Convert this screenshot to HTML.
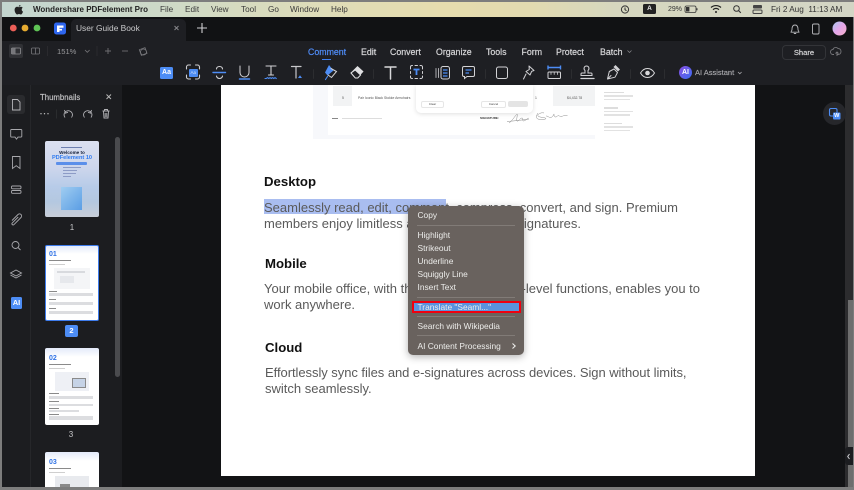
<!DOCTYPE html>
<html><head><meta charset="utf-8"><style>
html,body{margin:0;padding:0;width:854px;height:490px;overflow:hidden;background:#7d7d7d;font-family:"Liberation Sans",sans-serif}
#w{position:absolute;left:0;top:0;width:854px;height:490px;filter:blur(.3px)}
.a{position:absolute;white-space:nowrap}
svg{position:absolute;left:0;top:0}
.m{top:4px;font-size:8.2px;line-height:11px;color:#3a3a3a}
.n{top:46px;font-size:8.8px;line-height:12px;color:#d6d6d8;-webkit-text-stroke:.2px #d6d6d8}
.b{font-size:13px;line-height:16px;color:#5a5a5a;left:264px}
.h{font-size:13.2px;line-height:16px;color:#111;font-weight:bold}
.c{left:417.5px;font-size:8.4px;line-height:11px;color:#ececea}
.th{background:#fff;border-radius:2px}
</style></head><body><div id="w">
<div class="a" style="left:2px;top:2px;width:852px;height:15px;background:linear-gradient(90deg,#c3d5cf 0,#cdd9c8 18%,#dfdcb8 38%,#e6dcae 52%,#e2dab0 62%,#d6d7bf 72%,#d3d5c5 100%)"></div>
<div class="a" style="left:2px;top:17px;width:851px;height:24px;background:#111214"></div>
<div class="a" style="left:2px;top:41px;width:851px;height:44px;background:#1e1f23"></div>
<div class="a" style="left:71px;top:19px;width:115px;height:22px;background:#1e1f23;border-radius:5px 5px 0 0"></div>
<div class="a" style="left:2px;top:85px;width:28px;height:402px;background:#1c1d20"></div>
<div class="a" style="left:30px;top:85px;width:92px;height:402px;background:#1c1d20;border-left:1px solid #26272a"></div>
<div class="a" style="left:122px;top:85px;width:723px;height:402px;background:#121315"></div>
<div class="a" style="left:845px;top:85px;width:8px;height:402px;background:#2c2c2e"></div>
<div class="a" style="left:848px;top:300px;width:5px;height:187px;background:#6e6e6e"></div>
<div class="a" style="left:0;top:487px;width:854px;height:3px;background:#7d7d7d"></div>

<div class="a" style="left:33px;top:4px;font-size:8px;line-height:11px;color:#222;font-weight:bold">Wondershare PDFelement Pro</div>
<div class="a m" style="left:160px">File</div><div class="a m" style="left:185px">Edit</div><div class="a m" style="left:211px">View</div><div class="a m" style="left:241px">Tool</div><div class="a m" style="left:268px">Go</div><div class="a m" style="left:290px">Window</div><div class="a m" style="left:331px">Help</div>
<div class="a" style="left:643px;top:4px;width:13px;height:10px;background:#222;border-radius:1.5px;color:#eee;font-size:6.5px;line-height:10px;text-align:center;font-weight:bold">A</div>
<div class="a" style="left:668px;top:5px;font-size:7px;line-height:9px;color:#333">29%</div>
<div class="a" style="left:771px;top:4px;font-size:8.2px;line-height:11px;color:#333">Fri 2 Aug&nbsp; 11:13 AM</div>

<div class="a" style="left:76px;top:23px;font-size:8.4px;line-height:11px;color:#c8c8ca">User Guide Book</div>
<div class="a" style="left:57px;top:46px;font-size:7.6px;line-height:11px;color:#98989b">151%</div>
<div class="a n" style="left:308px;color:#4f8cf7;-webkit-text-stroke-color:#4f8cf7">Comment</div><div class="a n" style="left:361px">Edit</div><div class="a n" style="left:390px">Convert</div><div class="a n" style="left:436px">Organize</div><div class="a n" style="left:486px">Tools</div><div class="a n" style="left:521.5px">Form</div><div class="a n" style="left:556px">Protect</div><div class="a n" style="left:600px">Batch</div>
<div class="a" style="left:322px;top:58.5px;width:9px;height:1.5px;background:#3d7ff0"></div>
<div class="a" style="left:782px;top:45px;width:42px;height:13px;border:1px solid #333438;border-radius:4px;text-align:center;font-size:7.6px;line-height:14px;color:#dcdcde;-webkit-text-stroke:.15px #dcdcde">Share</div>
<div class="a" style="left:695px;top:68px;font-size:7.5px;line-height:10px;color:#a8a8ac;-webkit-text-stroke:.15px #a8a8ac">AI Assistant</div>
<div class="a" style="left:679px;top:66px;width:13px;height:13px;border-radius:50%;background:linear-gradient(135deg,#8a4fe0,#3a6cf2);color:#fff;font-size:7px;font-weight:bold;line-height:13px;text-align:center">AI</div>
<div class="a" style="left:160px;top:67px;width:13px;height:12px;background:#4d8df5;border-radius:1.5px;color:#fff;font-size:7px;font-weight:bold;line-height:12px;text-align:center">Aa</div>
<div class="a" style="left:189px;top:68.5px;width:8.5px;height:8.5px;background:#4d8df5;border-radius:1px;color:#cfe0fb;font-size:4.5px;line-height:8.5px;text-align:center">Aa</div>

<div class="a" style="left:40px;top:92px;font-size:7.8px;line-height:11px;color:#c4c4c6;-webkit-text-stroke:.15px #c4c4c6">Thumbnails</div>
<div class="a" style="left:11px;top:297px;width:11px;height:12px;background:#4d8df5;border-radius:1.5px;color:#fff;font-size:7.5px;font-weight:bold;line-height:12px;text-align:center">AI</div>

<div class="a" style="left:115px;top:137px;width:5px;height:240px;background:#4a4b4e;border-radius:3px"></div>

<div class="a th" style="left:45px;top:141px;width:54px;height:76px;background:linear-gradient(180deg,#dbe0f0 0,#cdd6ec 35%,#b7cbe8 60%,#b4c8e0 80%,#c8ced8 100%)"></div>
<div class="a" style="left:61px;top:146.5px;width:21px;height:1.5px;background:#6d7fb0"></div>
<div class="a" style="left:45px;top:149.5px;width:54px;text-align:center;font-size:4.6px;line-height:5px;font-weight:bold;color:#16203a">Welcome to</div>
<div class="a" style="left:45px;top:155px;width:54px;text-align:center;font-size:5.6px;line-height:6px;font-weight:bold;color:#2f7bf0">PDFelement 10</div>
<div class="a" style="left:56px;top:162px;width:31px;height:2.5px;background:#5b8fea;border-radius:1px"></div>
<div class="a" style="left:63px;top:166.5px;width:18px;height:1px;background:#8d9cc6"></div>
<div class="a" style="left:63px;top:169.5px;width:14px;height:1px;background:#8d9cc6"></div>
<div class="a" style="left:63px;top:172.5px;width:13px;height:1px;background:#8d9cc6"></div>
<div class="a" style="left:63px;top:175.5px;width:8px;height:1px;background:#8d9cc6"></div>
<div class="a" style="left:61px;top:187px;width:21px;height:23px;background:linear-gradient(135deg,#9ccdf2,#4a96e6);opacity:.85"></div>
<div class="a" style="left:68px;top:223px;font-size:8px;line-height:10px;color:#c8c8ca;width:8px;text-align:center">1</div>

<div class="a th" style="left:45px;top:245px;width:52px;height:74px;border:1px solid #3e7cec;background:linear-gradient(180deg,#e3eafa 0,#fff 8px)"></div>
<div class="a" style="left:49px;top:251px;font-size:7px;line-height:8px;font-weight:bold;color:#2f72e6">01</div>
<div class="a" style="left:49px;top:260px;width:22px;height:1px;background:#8a8a8a"></div>
<div class="a" style="left:49px;top:263.5px;width:16px;height:1px;background:#cfcfcf"></div>
<div class="a" style="left:54px;top:268px;width:36px;height:21px;background:#f4f5f7"></div>
<div class="a" style="left:57px;top:271px;width:28px;height:2px;background:#d8dade"></div>
<div class="a" style="left:60px;top:276px;width:14px;height:7px;background:#e6e8ec"></div>
<div class="a" style="left:49px;top:290.5px;width:8px;height:1px;background:#8a8a8a"></div>
<div class="a" style="left:49px;top:293px;width:44px;height:3px;background:#dcdde0"></div>
<div class="a" style="left:49px;top:299px;width:7px;height:1px;background:#8a8a8a"></div>
<div class="a" style="left:49px;top:302px;width:44px;height:3px;background:#dcdde0"></div>
<div class="a" style="left:49px;top:308px;width:7px;height:1px;background:#8a8a8a"></div>
<div class="a" style="left:49px;top:311px;width:44px;height:3px;background:#dcdde0"></div>
<div class="a" style="left:65px;top:325px;width:13px;height:12px;background:#4d8df5;border-radius:2px;color:#fff;font-size:7.5px;font-weight:bold;line-height:12px;text-align:center">2</div>

<div class="a th" style="left:45px;top:348px;width:54px;height:77px;background:linear-gradient(180deg,#e3eafa 0,#fff 9px)"></div>
<div class="a" style="left:49px;top:355px;font-size:7px;line-height:8px;font-weight:bold;color:#2f72e6">02</div>
<div class="a" style="left:49px;top:364px;width:22px;height:1px;background:#8a8a8a"></div>
<div class="a" style="left:49px;top:367.5px;width:16px;height:1px;background:#cfcfcf"></div>
<div class="a" style="left:55px;top:372px;width:34px;height:19px;background:#eef0f5"></div>
<div class="a" style="left:72px;top:378px;width:12px;height:8px;background:#c6d3e6;border:1px solid #8a8a8a"></div>
<div class="a" style="left:49px;top:393px;width:10px;height:1px;background:#8a8a8a"></div>
<div class="a" style="left:49px;top:396px;width:44px;height:3px;background:#dcdde0"></div>
<div class="a" style="left:49px;top:401px;width:10px;height:1px;background:#8a8a8a"></div>
<div class="a" style="left:49px;top:403.5px;width:44px;height:2px;background:#dcdde0"></div>
<div class="a" style="left:49px;top:407.5px;width:10px;height:1px;background:#8a8a8a"></div>
<div class="a" style="left:49px;top:409.5px;width:30px;height:2px;background:#dcdde0"></div>
<div class="a" style="left:49px;top:413.5px;width:10px;height:1px;background:#8a8a8a"></div>
<div class="a" style="left:49px;top:416px;width:44px;height:4px;background:#dcdde0"></div>
<div class="a" style="left:67px;top:430px;font-size:8px;line-height:10px;color:#c8c8ca;width:8px;text-align:center">3</div>

<div class="a th" style="left:45px;top:452px;width:54px;height:35px;background:linear-gradient(180deg,#e3eafa 0,#fff 9px);border-radius:2px 2px 0 0"></div>
<div class="a" style="left:49px;top:459px;font-size:7px;line-height:8px;font-weight:bold;color:#2f72e6">03</div>
<div class="a" style="left:49px;top:468px;width:22px;height:1px;background:#8a8a8a"></div>
<div class="a" style="left:49px;top:471.5px;width:16px;height:1px;background:#cfcfcf"></div>
<div class="a" style="left:55px;top:476px;width:34px;height:11px;background:#e8eaee"></div>
<div class="a" style="left:60px;top:484px;width:10px;height:3px;background:#8a8a8a"></div>

<div class="a" style="left:221px;top:85px;width:534px;height:391px;background:#fff"></div>
<div class="a" style="left:313px;top:85px;width:282px;height:54px;background:#f7f8fb"></div>
<div class="a" style="left:328px;top:85px;width:267px;height:50px;background:#fff"></div>
<div class="a" style="left:333px;top:86px;width:19px;height:20px;background:#f2f3f4"></div>
<div class="a" style="left:358px;top:96px;font-size:3.4px;line-height:4px;color:#555">Pair Iconic Black Stokke Armchairs</div>
<div class="a" style="left:342px;top:96px;font-size:3.4px;line-height:4px;color:#555">5</div>
<div class="a" style="left:553px;top:86px;width:42px;height:20px;background:#f2f3f4"></div>
<div class="a" style="left:567px;top:96px;font-size:3.4px;line-height:4px;color:#555">$4,432.78</div>
<div class="a" style="left:535px;top:96px;font-size:3.4px;line-height:4px;color:#555">1</div>
<div class="a" style="left:416px;top:85px;width:117px;height:28px;background:#fff;border-radius:0 0 5px 5px;box-shadow:0 1px 5px rgba(0,0,0,.13)"></div>
<div class="a" style="left:421px;top:100.5px;width:21px;height:5px;border:1px solid #e6e6e6;border-radius:2px;font-size:3px;line-height:5px;text-align:center;color:#444">Clear</div>
<div class="a" style="left:481px;top:100.5px;width:23px;height:5px;border:1px solid #e6e6e6;border-radius:2px;font-size:3px;line-height:5px;text-align:center;color:#444">Cancel</div>
<div class="a" style="left:508px;top:100.5px;width:20px;height:6px;background:#e4e4e4;border-radius:2px"></div>
<div class="a" style="left:332px;top:118px;width:6px;height:1px;background:#888"></div>
<div class="a" style="left:342px;top:118px;width:40px;height:1px;background:#ddd"></div>
<div class="a" style="left:480px;top:116px;font-size:3.1px;line-height:4px;color:#333;font-weight:bold">SIGNATURE:</div>
<div class="a" style="left:596px;top:85px;width:55px;height:60px;background:#fff"></div>
<div class="a" style="left:604px;top:91.5px;width:20px;height:1.5px;background:#ddd"></div><div class="a" style="left:604px;top:95px;width:29px;height:1.5px;background:#e2e2e2"></div><div class="a" style="left:604px;top:98.5px;width:26px;height:1.5px;background:#e2e2e2"></div>
<div class="a" style="left:604px;top:107px;width:14px;height:1.5px;background:#ddd"></div><div class="a" style="left:604px;top:110.5px;width:29px;height:1.5px;background:#e2e2e2"></div><div class="a" style="left:604px;top:114px;width:26px;height:1.5px;background:#e2e2e2"></div>
<div class="a" style="left:604px;top:122.5px;width:18px;height:1.5px;background:#ddd"></div><div class="a" style="left:604px;top:126px;width:29px;height:1.5px;background:#e2e2e2"></div><div class="a" style="left:604px;top:129.5px;width:26px;height:1.5px;background:#e2e2e2"></div>

<div class="a" style="left:264px;top:198.5px;width:182px;height:15.5px;background:#a9bdf0"></div>
<div class="a h" style="left:264px;top:174px">Desktop</div>
<div class="a b" style="top:200px">Seamlessly read, edit, comment, compress, convert, and sign. Premium</div>
<div class="a b" style="top:216px">members enjoy limitless access</div>
<div class="a b" style="top:216px;left:auto;right:273px">signatures.</div>
<div class="a h" style="left:265px;top:256px">Mobile</div>
<div class="a b" style="top:281px">Your mobile office, with the same</div>
<div class="a b" style="top:281px;left:auto;right:154px">-level functions, enables you to</div>
<div class="a b" style="top:297px">work anywhere.</div>
<div class="a h" style="left:265px;top:340px">Cloud</div>
<div class="a b" style="top:365px;left:265px;letter-spacing:-.05px">Effortlessly sync files and e-signatures across devices. Sign without limits,</div>
<div class="a b" style="top:381px;left:265px">switch seamlessly.</div>

<div class="a" style="left:408px;top:206px;width:116px;height:149px;background:#69625e;border-radius:5px;box-shadow:0 2px 8px rgba(0,0,0,.3)"></div>
<div class="a" style="left:417px;top:225px;width:98px;height:1px;background:#817b77"></div>
<div class="a" style="left:417px;top:296.5px;width:98px;height:1px;background:#817b77"></div>
<div class="a" style="left:417px;top:316px;width:98px;height:1px;background:#817b77"></div>
<div class="a" style="left:417px;top:335px;width:98px;height:1px;background:#817b77"></div>
<div class="a" style="left:412px;top:300.5px;width:105px;height:8.5px;background:#5a93dd;border:2px solid #ee0010"></div>
<div class="a c" style="top:210px">Copy</div>
<div class="a c" style="top:230px">Highlight</div>
<div class="a c" style="top:243px">Strikeout</div>
<div class="a c" style="top:256px">Underline</div>
<div class="a c" style="top:269px">Squiggly Line</div>
<div class="a c" style="top:282px">Insert Text</div>
<div class="a c" style="top:301.5px">Translate "Seaml..."</div>
<div class="a c" style="top:321px">Search with Wikipedia</div>
<div class="a c" style="top:341px">AI Content Processing</div>

<div class="a" style="left:823px;top:102px;width:23px;height:23px;border-radius:50%;background:#26272b"></div>
<div class="a" style="left:845px;top:447px;width:8px;height:18px;background:#1c1d20;border-radius:3px 0 0 3px"></div>

<svg width="854" height="490" viewBox="0 0 854 490" fill="none">
<path d="M20.6 5c-.2 1-1 1.7-1.900 1.700 0-1 .9-1.800 1.900-1.700zM21.700 9.400c0-1 .8-1.500 1-1.700-.6-.8-1.400-1-1.800-1-.8 0-1.400.5-1.900.5s-1-.5-1.800-.5c-1.400 0-2.600 1.200-2.600 3.200 0 2 1.400 4.600 2.600 4.600.6 0 1-.5 1.800-.5s1.100.5 1.800.5c1 0 1.900-1.800 2.200-2.900-.8-.4-1.300-1-1.300-2.200z" fill="#222"/>
<g stroke="#333" stroke-width="1"><circle cx="625" cy="9.5" r="3.6"/><path d="M625 7.500v2.200l1.500 1"/></g>
<rect x="685" y="6" width="11" height="6.5" rx="1.5" stroke="#333" stroke-width=".8"/><rect x="686" y="7" width="3.4" height="4.5" fill="#333"/><path d="M697 8.300v2" stroke="#333"/>
<path d="M711 7.500c3-2.600 7-2.600 10 0M713 9.600c2-1.600 4-1.600 6 0" stroke="#222" stroke-width="1.2"/><circle cx="716" cy="12" r="1" fill="#222"/>
<circle cx="736.5" cy="8.5" r="2.8" stroke="#333" stroke-width="1"/><path d="M738.600 10.600l2.200 2.200" stroke="#333" stroke-width="1.1"/>
<rect x="753" y="5" width="9" height="3.5" rx="1" fill="#444"/><rect x="753" y="10" width="9" height="3.5" rx="1" stroke="#444"/>

<circle cx="13.3" cy="28" r="3.4" fill="#ec5f57"/><circle cx="25" cy="28" r="3.4" fill="#e6ab30"/><circle cx="37" cy="28" r="3.4" fill="#5fc455"/>
<rect x="54" y="22.5" width="12" height="12" rx="2.5" fill="#2e66ee"/><path d="M57 25.500h6.500v2.200h-4v1.200h2.500v1.600h-2.500v1.500h-2.500z" fill="#fff"/>
<path d="M174.500 26l4 4M178.500 26l-4 4" stroke="#8a8a8e" stroke-width=".9"/>
<path d="M202 23v10M197 28h10" stroke="#cfcfd2" stroke-width="1.1"/>
<path d="M795 25c-2.600 0-3 2-3 4.500 0 1.200-1 2-1 2.700h8c0-.7-1-1.500-1-2.700 0-2.500-.4-4.500-3-4.500zM793.800 33.500h2.400" stroke="#b8b8bc" stroke-width=".9"/>
<rect x="812.5" y="24" width="6.5" height="10" rx="1.3" stroke="#b8b8bc" stroke-width=".9"/>
<circle cx="839.5" cy="28.5" r="7" fill="url(#av)"/>
<defs><linearGradient id="av" x1="0" y1="0" x2="1" y2="1"><stop offset="0" stop-color="#a6c8f0"/><stop offset=".5" stop-color="#e5a6ea"/><stop offset="1" stop-color="#f5b0c8"/></linearGradient></defs>

<rect x="9" y="44" width="14" height="14" rx="2" fill="#303135"/>
<rect x="11.5" y="48" width="9" height="6" rx="1" stroke="#8e8e92" stroke-width=".8"/><path d="M15 48v6" stroke="#8e8e92" stroke-width=".8"/><path d="M12 48.500h3v5h-3z" fill="#77777b"/>
<rect x="31.5" y="48" width="8" height="6" rx="1" stroke="#77777b" stroke-width=".8"/><path d="M35.500 48v6" stroke="#77777b" stroke-width=".8"/>
<path d="M47.500 46v10M97 46v10" stroke="#2d2e32" stroke-width=".8"/>
<path d="M85 50l2.300 2.300 2.300-2.300" stroke="#77777b" stroke-width=".8"/>
<path d="M105 51h6M108 48v6" stroke="#6e6e72" stroke-width=".9"/><path d="M122 51h6" stroke="#6e6e72" stroke-width=".9"/>
<rect x="140" y="48.5" width="6" height="6" transform="rotate(-20 143 51)" stroke="#77777b" stroke-width=".8"/><circle cx="143.5" cy="52" r="3" stroke="#77777b" stroke-width=".8"/>
<path d="M627.500 50.500l2 2 2-2" stroke="#8a8a8e" stroke-width=".7"/>
<g transform="translate(837 52)" stroke="#77777b" stroke-width=".9"><path d="M-3 2.500h-1a2.500 2.500 0 0 1 0-5c.4-2 3.500-3 5-1 1.500 0 3 1 3 3s-1.500 3-3 3h-1"/><path d="M0 4v-4M-1.500 1.500L0 0l1.500 1.500"/></g>
<path d="M738 72l1.800 1.800 1.800-1.800" stroke="#a8a8ac" stroke-width=".8"/>

<g stroke-linecap="round">
<path d="M186.500 69v-2a2 2 0 0 1 2-2h2M195.500 65h2a2 2 0 0 1 2 2v2M199.500 75v2a2 2 0 0 1-2 2h-2M190.500 79h-2a2 2 0 0 1-2-2v-2" stroke="#cfcfd2" stroke-width="1.1"/>
<path d="M213 72.500h12.500" stroke="#4d8df5" stroke-width="1.4"/>
<path d="M222.500 69c0-1.500-1.300-2.500-3-2.500s-3 1-3 2.500M216.500 76c0 1.200 1.300 2.500 3 2.500s3-1.300 3-2.500" stroke="#d2d2d5" stroke-width="1.1"/>
<path d="M240 66v6.500a4.500 4.500 0 0 0 9 0V66" stroke="#d2d2d5" stroke-width="1"/>
<path d="M239.500 79h10" stroke="#4d8df5" stroke-width="1.5"/>
<path d="M266 66h10M271 66v9M268.500 75h5" stroke="#d2d2d5" stroke-width="1.1"/>
<path d="M265 78.500h1.300l1.200-.8 1.300.8 1.200-.8 1.300.8 1.200-.8 1.300.8 1.200-.8 1.300.8" stroke="#4d8df5" stroke-width="1.1"/>
<path d="M291.500 66.500h9.500M296 66.500v11.500" stroke="#c8c8cb" stroke-width="1.2"/>
<path d="M298 78h4l-2-2.800z" fill="#4d8df5"/>
<path d="M313.500 69.500v9M373.500 69.500v9M485.500 69.500v9M571.500 69.500v9M630.500 69.500v9M664.500 69.500v9" stroke="#303135" stroke-width=".8"/>
<path d="M329 65l4.500 5.500-6 5-2.500-3z" fill="#4d8df5"/>
<path d="M331 68.500l5.500 3-5 6-3.500-2.500" stroke="#d2d2d5" stroke-width="1"/>
<path d="M325.500 79.500l2-3" stroke="#4d8df5" stroke-width="1.1"/>
<path d="M351 73l6.500-6.500 5.500 5-5.500 6H355z" fill="#e0e0e2" stroke="#e0e0e2" stroke-width=".8"/>
<path d="M351 73l4.300 5h2.500l2.800-3-5.400-5z" fill="#1e1f23" stroke="#e0e0e2" stroke-width="1"/>
<path d="M385 67h11M390.500 67v12" stroke="#d8d8da" stroke-width="1.5"/>
<path d="M410.500 69v-2a1.500 1.500 0 0 1 1.500-1.500h.5M415 65.500h2.500M420 65.500h1a1.500 1.500 0 0 1 1.500 1.500v2M422.500 71.500v2M422.500 76v1a1.500 1.500 0 0 1-1.500 1.500h-1M417.500 78.500H415M412.500 78.500H412a1.500 1.500 0 0 1-1.500-1.500v-1M410.500 71.500v2" stroke="#d2d2d5" stroke-width="1"/>
<path d="M413.500 69.500h6M416.500 69.500v5.500" stroke="#4d8df5" stroke-width="1.8" stroke-linecap="butt"/>
<path d="M436 68.500v9M438.500 68.500v9" stroke="#bcbcc0" stroke-width=".9"/>
<rect x="441" y="66.5" width="8.5" height="12.5" rx="2" stroke="#d2d2d5" stroke-width="1"/>
<path d="M443 70h4.500M443 73h4.500M443 76h4.500" stroke="#4d8df5" stroke-width="1.2" stroke-linecap="butt"/>
<path d="M464 66.500h9a1.500 1.500 0 0 1 1.500 1.500v7a1.500 1.500 0 0 1-1.500 1.500h-6l-2.500 2v-2H464a1.500 1.500 0 0 1-1.500-1.500v-7a1.500 1.500 0 0 1 1.500-1.500z" stroke="#d2d2d5" stroke-width="1"/>
<path d="M465.500 70h6M465.500 73h3.500" stroke="#4d8df5" stroke-width="1.3" stroke-linecap="butt"/>
<rect x="496.5" y="67" width="11" height="11.5" rx="2" stroke="#d2d2d5" stroke-width="1"/>
<path d="M529 66l5 4.500-2.300.8-1.700 3.700-4-3.500 3.300-2zM526 74l-2.500 5" stroke="#d2d2d5" stroke-width="1" stroke-linejoin="round"/>
<path d="M548 67.500h12.500M548 65.500v4M560.500 65.500v4" stroke="#4d8df5" stroke-width="1.4" stroke-linecap="butt"/>
<rect x="548" y="72" width="12.5" height="6.5" rx="1" stroke="#d2d2d5" stroke-width="1"/>
<path d="M551 72v2.500M554.200 72v2.500M557.400 72v2.500" stroke="#d2d2d5" stroke-width=".8"/>
<path d="M581 75.500v-1.500a1 1 0 0 1 1-1h3v-2.500c-1-1-1.200-2-.8-3 .4-1 1.300-1.500 2.300-1.500s1.900.5 2.300 1.500c.4 1 .2 2-.8 3V73h3a1 1 0 0 1 1 1v1.500z" stroke="#d2d2d5" stroke-width="1"/>
<path d="M581 78.500h13" stroke="#d2d2d5" stroke-width="1.3"/>
<path d="M607.500 79l1.800-7.500 4.700-2.500 3.500 3.500-2.500 4.700zM608 78.500l3-3" stroke="#d2d2d5" stroke-width="1" stroke-linejoin="round"/>
<path d="M613.500 67l2-2 4.500 4.500-2 2z" fill="#d2d2d5"/>
<path d="M640.500 73c1.800-3 4.200-4.500 7-4.500s5.200 1.500 7 4.500c-1.800 3-4.200 4.500-7 4.500s-5.200-1.500-7-4.500z" stroke="#d8d8da" stroke-width="1"/>
<circle cx="647.5" cy="73" r="2.3" fill="#d8d8da"/>
</g>

<path d="M106.500 94.500l4.500 4.500M111 94.500l-4.500 4.500" stroke="#bbb" stroke-width=".9"/>
<circle cx="41" cy="113.700" r=".7" fill="#bbb"/><circle cx="44.500" cy="113.700" r=".7" fill="#bbb"/><circle cx="48" cy="113.700" r=".7" fill="#bbb"/>
<path d="M56.500 109.500v9" stroke="#2f3033" stroke-width=".8"/>
<g stroke="#b4b4b8" stroke-width=".9" fill="none">
<path d="M65 117.500a4.200 4.200 0 1 1 6.500 0M64.500 110l1 3.200 2.500-1"/>
<path d="M84.500 117.500a4.200 4.200 0 1 1 6.500 0M91.500 110l-1 3.200-2.500-1"/>
<path d="M102.500 111h7M104.500 111v-1.500h3v1.500M103.500 111.500l.5 6.500h4l.5-6.500M105.200 113v4M106.800 113v4"/>
</g>
<rect x="7" y="95" width="18" height="19" rx="3" fill="#2a2b2e"/>
<g stroke="#a8a8ac" stroke-width=".9" fill="none">
<path d="M12.500 99.500h5l2.500 2.500v8h-7.500z" stroke="#b4b4b8"/>
<path d="M11.500 129.500h9.500a.8.800 0 0 1 .8.800v6a.8.800 0 0 1-.8.800H18l-1.500 2-1.500-2h-3.500a.8.800 0 0 1-.8-.8v-6a.8.800 0 0 1 .8-.8z"/>
<path d="M12.500 156.500h7.500v12l-3.800-2.800-3.700 2.800z"/>
<rect x="11.500" y="186" width="9.500" height="2.800" rx="1"/><rect x="11.500" y="190.500" width="9.500" height="2.800" rx="1"/>
<path d="M12 220.500l6-6a2 2 0 0 1 3 3l-7 7a1 1 0 0 1-1.800-1.500l6-6"/>
<circle cx="15.500" cy="245" r="3.500"/><path d="M18 247.500l2.500 2.500"/>
<path d="M16 270l5.500 3-5.500 3-5.500-3zM10.500 275l5.500 3 5.500-3"/>
</g>

<path d="M512.500 343.500l2.700 2.500-2.700 2.500" stroke="#ececea" stroke-width="1.1" fill="none"/>
<path d="M849.500 454l-1.800 2.500 1.800 2.500" stroke="#cfcfd2" stroke-width="1" fill="none"/>
<rect x="829.5" y="108.5" width="7.5" height="7.5" rx="1.5" stroke="#4d8df5" stroke-width="1.1" fill="none"/>
<rect x="833" y="112.5" width="7.5" height="7" rx="1" fill="#4d8df5"/>
<path d="M509 123c3-2 6-7 8-9 1 0-1 6 0 7s3-3 5-3c1.500 0 0 3 1.500 3s3-2 5-3M507 121.500c6-.5 12-1 22-2.500M538 113c-1.500 2-2.500 5 0 6s8 .5 8-.5-7-1-8-2.500 3-4 6-3M546 116c2.500 0 3 2 5 1.500s3-4 3-3.500c0 1 0 3 1.500 3s2-1.500 3-1.500 1 1.500 3 1 2-1.500 6-1" stroke="#8a8a8a" stroke-width=".5" fill="none"/>
</svg>
<div class="a" style="left:833px;top:112.5px;width:7.5px;height:7px;color:#fff;font-size:5.5px;line-height:7px;text-align:center;font-weight:bold">W</div>
</div></body></html>
